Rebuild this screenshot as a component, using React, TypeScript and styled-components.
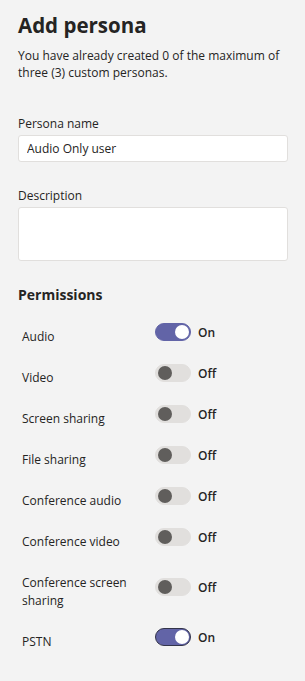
import styled, { createGlobalStyle } from "styled-components";

const GlobalStyle = createGlobalStyle`
  html, body {
    margin: 0;
    padding: 0;
    background: #f3f3f3;
  }
  body {
    font-family: "Open Sans", "Noto Sans", sans-serif;
    color: #252423;
  }
`;

const Panel = styled.div`
  width: 305px;
  min-height: 681px;
  box-sizing: border-box;
  padding: 10px 17px 0 18px;
  display: flex;
  flex-direction: column;
`;

const Title = styled.h1`
  margin: 0;
  font-size: 20.5px;
  font-weight: 700;
  line-height: 30px;
`;

const Intro = styled.p`
  margin: 7px 0 0;
  font-size: 12px;
  line-height: 17px;
`;

const Field = styled.div<{ $top: number }>`
  display: flex;
  flex-direction: column;
  gap: 3px;
  margin-top: ${(p) => p.$top}px;
`;

const Label = styled.label`
  font-size: 12px;
  line-height: 16px;
`;

const Input = styled.input`
  box-sizing: border-box;
  height: 27px;
  width: 100%;
  border: 1px solid #e1dfdd;
  border-radius: 3px;
  background: #fff;
  padding: 0 8px;
  font: inherit;
  font-size: 12px;
  color: #252423;
  outline: none;
`;

const TextArea = styled.textarea`
  box-sizing: border-box;
  height: 54px;
  width: 100%;
  border: 1px solid #e1dfdd;
  border-radius: 3px;
  background: #fff;
  resize: none;
  outline: none;
`;

const SectionTitle = styled.h2`
  margin: 24px 0 23px;
  font-size: 14px;
  font-weight: 700;
  line-height: 20px;
`;

const Rows = styled.div`
  display: flex;
  flex-direction: column;
  gap: 23px;
`;

const Row = styled.div`
  display: grid;
  grid-template-columns: 133px auto;
  align-items: center;
  padding-left: 4px;
`;

const RowLabel = styled.span`
  font-size: 12px;
  line-height: 18px;
  max-width: 110px;
`;

const ToggleWrap = styled.div`
  display: flex;
  align-items: center;
  gap: 7px;
  height: 18px;
  margin: -5px 0 5px;
`;

const Track = styled.span<{ $on: boolean; $focus?: boolean }>`
  position: relative;
  box-sizing: border-box;
  width: 36px;
  height: 18px;
  border-radius: 9px;
  background: ${(p) => (p.$on ? "#6264a7" : "#e1dfdd")};
  border: 1px solid ${(p) => (p.$focus ? "#33344a" : p.$on ? "#6264a7" : "#e1dfdd")};
`;

const Knob = styled.span<{ $on: boolean }>`
  position: absolute;
  top: 1px;
  left: ${(p) => (p.$on ? "19px" : "2px")};
  width: 14px;
  height: 14px;
  border-radius: 50%;
  background: ${(p) => (p.$on ? "#fff" : "#605e5c")};
`;

const State = styled.span`
  font-size: 12px;
  font-weight: 600;
`;

const perms = [
  { name: "Audio", on: true },
  { name: "Video", on: false },
  { name: "Screen sharing", on: false },
  { name: "File sharing", on: false },
  { name: "Conference audio", on: false },
  { name: "Conference video", on: false },
  { name: "Conference screen sharing", on: false },
  { name: "PSTN", on: true, focus: true },
];

export default function App() {
  return (
    <>
      <GlobalStyle />
      <Panel>
        <Title>Add persona</Title>
        <Intro>You have already created 0 of the maximum of three (3) custom personas.</Intro>
        <Field $top={35}>
          <Label>Persona name</Label>
          <Input defaultValue="Audio Only user" />
        </Field>
        <Field $top={26}>
          <Label>Description</Label>
          <TextArea />
        </Field>
        <SectionTitle>Permissions</SectionTitle>
        <Rows>
          {perms.map((p) => (
            <Row key={p.name}>
              <RowLabel>{p.name}</RowLabel>
              <ToggleWrap>
                <Track $on={p.on} $focus={p.focus}>
                  <Knob $on={p.on} />
                </Track>
                <State>{p.on ? "On" : "Off"}</State>
              </ToggleWrap>
            </Row>
          ))}
        </Rows>
      </Panel>
    </>
  );
}
